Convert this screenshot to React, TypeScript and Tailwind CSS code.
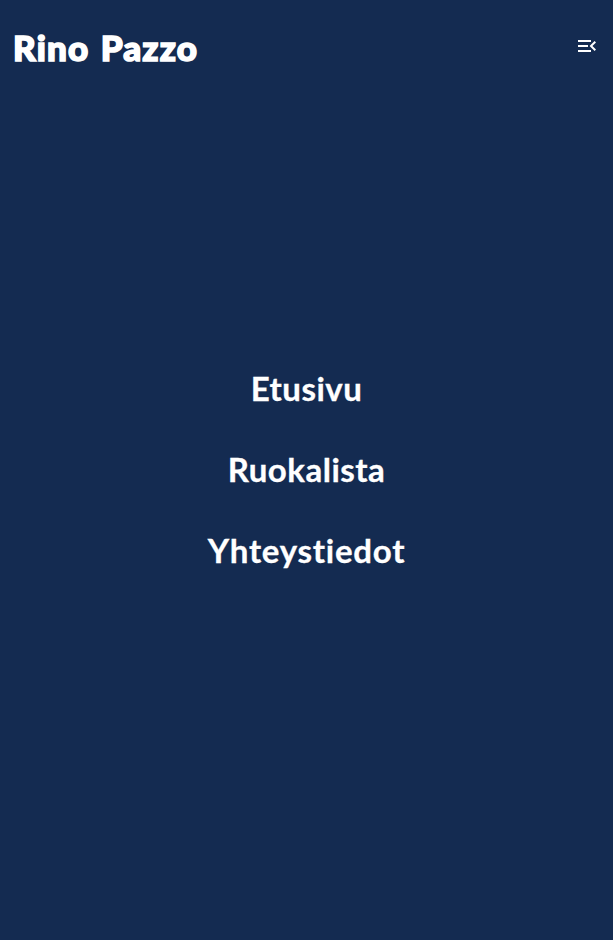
import { MdMenuOpen } from "react-icons/md";

const links = [
  { label: "Etusivu", style: "tracking-[0.5px]" },
  { label: "Ruokalista", style: "tracking-[0.5px]" },
  { label: "Yhteystiedot", style: "tracking-[0.75px]" },
];

export default function App() {
  return (
    <div className="flex h-[940px] w-full flex-col bg-[#142b51] font-['Lato',sans-serif] text-white [font-variant-ligatures:none]">
      <header className="flex h-24 shrink-0 items-center justify-between pr-[14px] pl-[13px]">
        <h1 className="mb-0.5 text-[35px] leading-none font-black tracking-[1.15px] whitespace-nowrap [-webkit-text-stroke:1.6px_white] [word-spacing:2px]">
          Rino Pazzo
        </h1>
        <button aria-label="Valikko" className="mb-1">
          <MdMenuOpen className="size-6" />
        </button>
      </header>
      <nav className="mt-[252px] flex flex-col items-center">
        {links.map((l) => (
          <a key={l.label} className={`flex h-[81px] items-center text-[33px] leading-none font-bold [-webkit-text-stroke:0.3px_white] ${l.style}`}>
            {l.label}
          </a>
        ))}
      </nav>
    </div>
  );
}
